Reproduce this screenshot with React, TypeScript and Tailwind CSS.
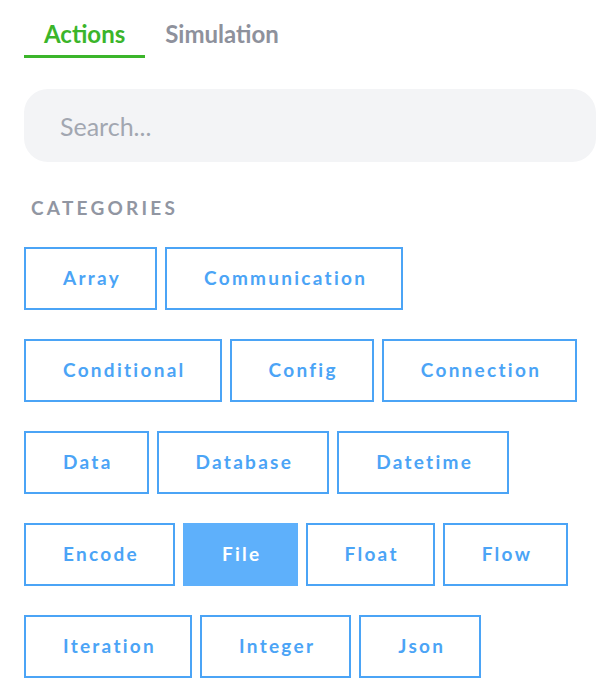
import { useState } from "react";

const categories = [
  "Array",
  "Communication",
  "Conditional",
  "Config",
  "Connection",
  "Data",
  "Database",
  "Datetime",
  "Encode",
  "File",
  "Float",
  "Flow",
  "Iteration",
  "Integer",
  "Json",
];

export default function App() {
  const [tab, setTab] = useState("Actions");
  const [selected, setSelected] = useState("File");

  return (
    <div className="min-h-screen bg-white px-6 font-['Lato','Open_Sans',sans-serif]">
      <div className="flex pt-[18px]">
        {["Actions", "Simulation"].map((name) => (
          <button
            key={name}
            onClick={() => setTab(name)}
            className={`border-b-[3px] px-5 pb-[5px] text-[24px] font-bold leading-[32px] ${
              tab === name ? "border-[#3bb52a] text-[#3bb52a]" : "border-transparent text-[#8e919c]"
            }`}
          >
            {name}
          </button>
        ))}
      </div>

      <input
        placeholder="Search..."
        className="mt-[31px] h-[73px] w-[572px] rounded-[24px] bg-[#f3f4f6] px-9 text-[25px] text-gray-700 outline-none placeholder:text-[#a2a7b1]"
      />

      <h3 className="mt-[32px] pl-[7px] text-[19px] font-bold uppercase leading-[28px] tracking-[0.17em] text-[#9196a2]">
        Categories
      </h3>

      <div className="mt-[25px] flex w-[572px] flex-wrap gap-x-2 gap-y-[29px]">
        {categories.map((name) => (
          <button
            key={name}
            onClick={() => setSelected(name)}
            className={`h-[63px] border-2 border-[#4ba4f6] pl-[37px] pr-[34px] text-[19px] font-bold tracking-[0.12em] ${
              selected === name ? "border-[#5eb0fb] bg-[#5eb0fb] text-white" : "bg-white text-[#4ba4f6]"
            }`}
          >
            {name}
          </button>
        ))}
      </div>
    </div>
  );
}
